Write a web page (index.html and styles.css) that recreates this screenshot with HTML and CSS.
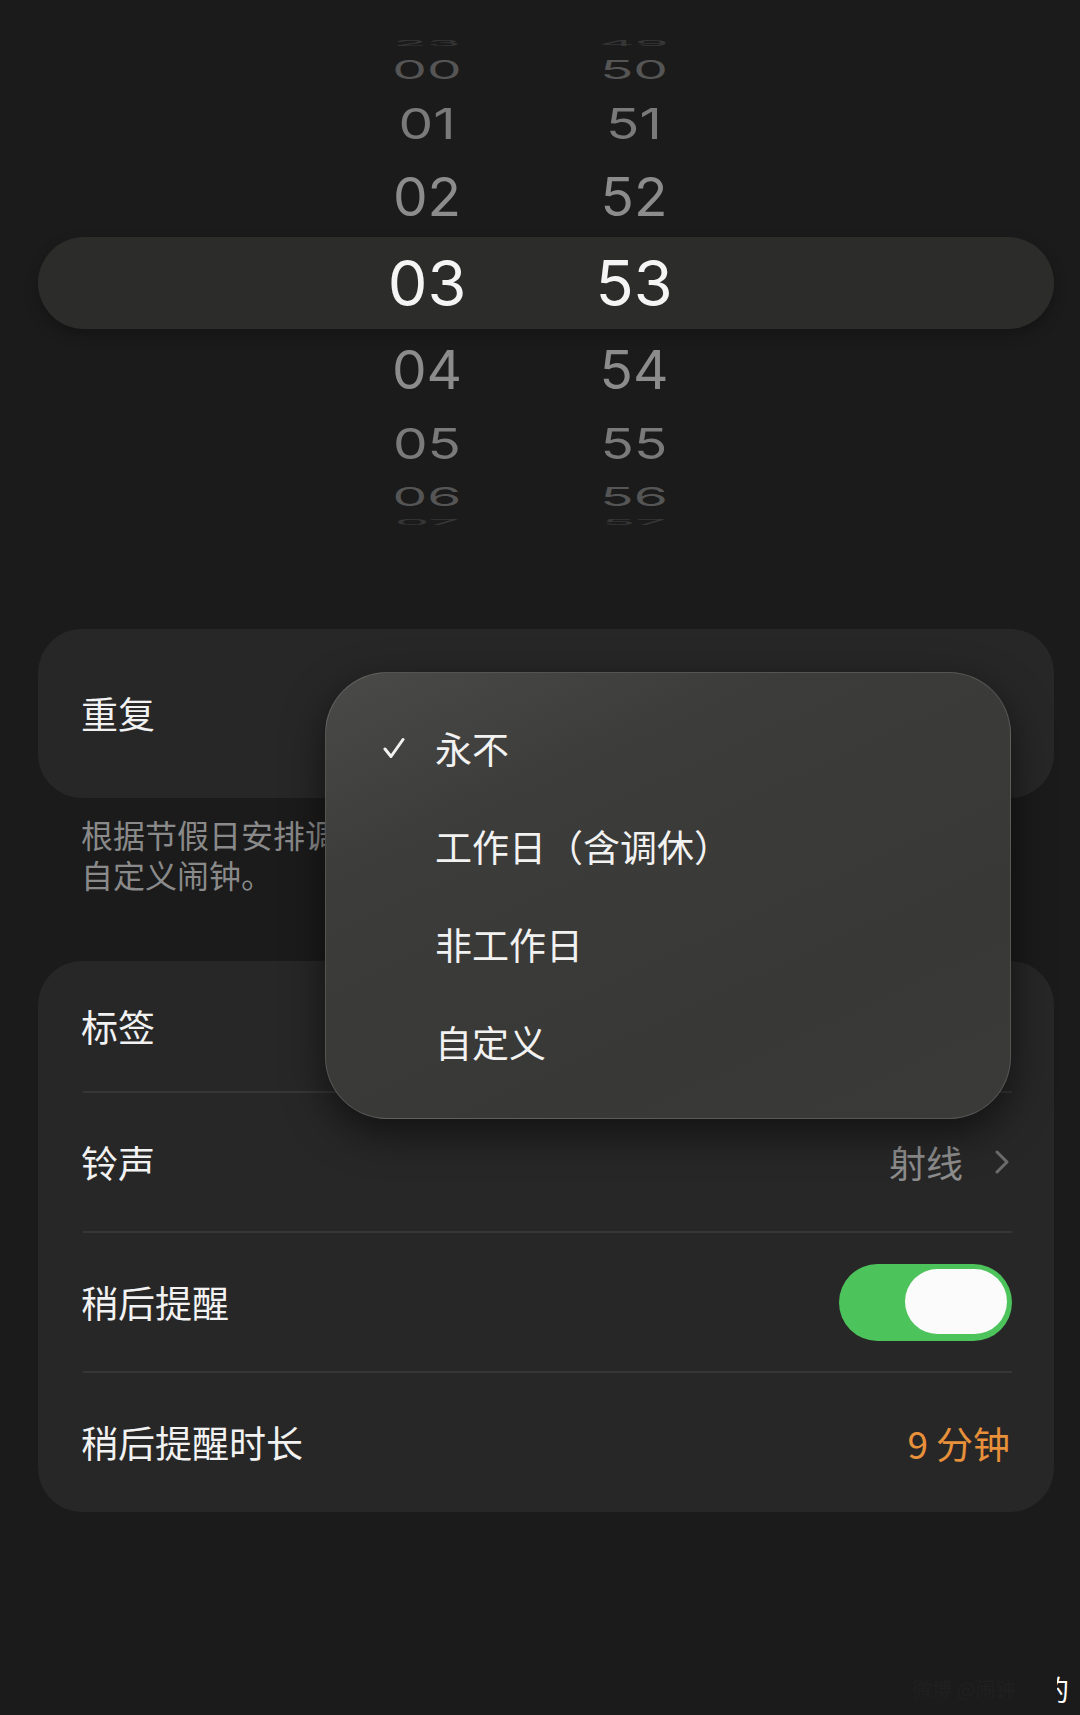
FILE: index.html
```html
<!DOCTYPE html>
<html lang="zh-CN">
<head>
<meta charset="utf-8">
<title>闹钟</title>
<link rel="stylesheet" href="styles.css">
</head>
<body>
<div class="page">
  <div class="picker">
    <div class="prow r-g1"><span class="cell"><span class="num">23</span></span><span class="cell"><span class="num">49</span></span></div>
    <div class="prow r-3"><span class="cell"><span class="num">00</span></span><span class="cell"><span class="num">50</span></span></div>
    <div class="prow r-2 t68"><span class="cell"><span class="num">01</span></span><span class="cell"><span class="num">51</span></span></div>
    <div class="prow r-1 t80"><span class="cell"><span class="num">02</span></span><span class="cell"><span class="num">52</span></span></div>
    <div class="prow sel"><span class="cell"><span class="num">03</span></span><span class="cell"><span class="num">53</span></span></div>
    <div class="prow r-1 t82"><span class="cell"><span class="num">04</span></span><span class="cell"><span class="num">54</span></span></div>
    <div class="prow r-2 t64"><span class="cell"><span class="num">05</span></span><span class="cell"><span class="num">55</span></span></div>
    <div class="prow r-3 t42"><span class="cell"><span class="num">06</span></span><span class="cell"><span class="num">56</span></span></div>
    <div class="prow r-g2"><span class="cell"><span class="num">07</span></span><span class="cell"><span class="num">57</span></span></div>
  </div>

  <div class="card repeat-card">
    <span class="label">重复</span>
  </div>
  <p class="footnote">根据节假日安排调休自动调整闹钟，如需其他重复规则请使用<br>自定义闹钟。</p>

  <div class="card list-card">
    <div class="row row-first"><span class="label">标签</span></div>
    <div class="row">
      <span class="label">铃声</span>
      <span class="value">射线
        <svg class="chev" width="14" height="24" viewBox="0 0 14 24"><path d="M2 2 L12 12 L2 22" fill="none" stroke="#6c6c6c" stroke-width="3" stroke-linecap="round" stroke-linejoin="round"/></svg>
      </span>
    </div>
    <div class="row">
      <span class="label">稍后提醒</span>
      <span class="toggle"><span class="knob"></span></span>
    </div>
    <div class="row row-last">
      <span class="label">稍后提醒时长</span>
      <span class="accent"><span class="digit">9</span>分钟</span>
    </div>
  </div>

  <div class="menu">
    <div class="mitem"><svg class="check" width="22" height="22" viewBox="0 0 22 22"><path d="M2 12 L8 19.5 L20 2.5" fill="none" stroke="#f2f2f2" stroke-width="3" stroke-linecap="round" stroke-linejoin="round"/></svg><span>永不</span></div>
    <div class="mitem"><span>工作日（含调休）</span></div>
    <div class="mitem"><span>非工作日</span></div>
    <div class="mitem"><span>自定义</span></div>
  </div>

  <div class="wm">微博 @闹钟</div>
  <div class="wm-edge"><span>的</span></div>
</div>
</body>
</html>
```

FILE: styles.css
```css
html, body {
  margin: 0;
  padding: 0;
  background: #1b1b1b;
}
.page {
  position: relative;
  width: 1080px;
  height: 1715px;
  box-sizing: border-box;
  padding: 37px 26px 0 38px;
  overflow: hidden;
  font-family: "Noto Sans CJK SC", "Noto Sans", sans-serif;
  color: #f2f2f2;
}

/* ---------- time picker ---------- */
.picker {
  display: flex;
  flex-direction: column;
}
.prow {
  display: flex;
  align-items: center;
  flex-shrink: 0;
  padding-left: 329px;
  gap: 87px;
}
.cell {
  width: 120px;
  display: flex;
  justify-content: center;
}
.num {
  display: block;
  font-family: Inter, "Liberation Sans", sans-serif;
  font-weight: 400;
  font-size: 55px;
  line-height: 1;
}
.r-g1 { height: 12px; color: #363636; }
.r-g2 { height: 10px; color: #363636; }
.r-g1 .num, .r-g2 .num { transform: scaleY(0.14); }
.r-3 { height: 40px; color: #555555; }
.r-3 .num { transform: scaleY(0.47); }
.r-2 { color: #7a7a7a; }
.r-2 .num { transform: scaleY(0.77); }
.r-1 { color: #8c8c8c; }
.r-1 .num { transform: scaleY(0.96); }
.t42 { height: 42px; }
.t64 { height: 64px; }
.t68 { height: 68px; }
.t80 { height: 80px; }
.t82 { height: 82px; }
.prow.sel {
  height: 92px;
  background: #2c2c2a;
  border-radius: 46px;
  color: #f5f5f5;
  box-shadow: 0 6px 14px rgba(0, 0, 0, 0.25);
}
.sel .num {
  font-size: 63px;
}

/* ---------- cards ---------- */
.card {
  background: #272727;
  border-radius: 44px;
}
.label {
  font-size: 37px;
  line-height: 1.2;
  color: #f2f2f2;
}
.repeat-card {
  height: 169px;
  margin-top: 102px;
  display: flex;
  align-items: center;
  padding: 0 43px;
}
.footnote {
  margin: 16px 0 0;
  padding-left: 43px;
  font-size: 32px;
  line-height: 40px;
  color: #8a8a8a;
  white-space: nowrap;
}
.list-card {
  margin-top: 67px;
  padding: 0 42px 0 45px;
  display: flex;
  flex-direction: column;
}
.list-card .label {
  margin-left: -2px;
}
.row {
  height: 138px;
  display: flex;
  align-items: center;
  justify-content: space-between;
  border-top: 2px solid #363636;
  flex-shrink: 0;
}
.row-first {
  height: 130px;
  border-top: none;
}
.row-last {
  height: 139px;
}
.value {
  display: flex;
  align-items: center;
  gap: 32px;
  font-size: 37px;
  color: #8d8d8d;
}
.chev {
  display: block;
  margin-right: 3px;
}
.accent {
  font-size: 37px;
  color: #e8913a;
  margin-right: 2px;
}
.digit {
  margin-right: 8px;
}
.toggle {
  width: 173px;
  height: 77px;
  box-sizing: border-box;
  border-radius: 39px;
  background: #4dc35b;
  display: flex;
  align-items: center;
  justify-content: flex-end;
  padding: 0 5px 2px;
}
.knob {
  width: 102px;
  height: 65px;
  border-radius: 33px;
  background: #fbfbfb;
}

/* ---------- popup menu ---------- */
.menu {
  position: absolute;
  left: 325px;
  top: 672px;
  width: 686px;
  height: 447px;
  box-sizing: border-box;
  padding: 26px 0 0 57px;
  border-radius: 62px;
  background: linear-gradient(155deg, #4a4a48 0%, #3c3c3a 28%, #383836 70%, #3a3a38 100%);
  border: 1.5px solid rgba(255, 255, 255, 0.14);
  box-shadow: 0 14px 40px rgba(0, 0, 0, 0.55);
  display: flex;
  flex-direction: column;
}
.mitem {
  height: 98px;
  display: flex;
  align-items: center;
  padding-left: 52px;
  position: relative;
  font-size: 37px;
  color: #f2f2f2;
  flex-shrink: 0;
}
.check {
  position: absolute;
  left: 0;
  top: 38px;
}

/* ---------- watermark ---------- */
.wm {
  position: absolute;
  left: 912px;
  top: 1676px;
  font-size: 20px;
  line-height: 26px;
  color: #202020;
  white-space: nowrap;
}
.wm-edge {
  position: absolute;
  left: 1057px;
  top: 1672px;
  width: 12px;
  height: 34px;
  overflow: hidden;
}
.wm-edge span {
  position: absolute;
  left: -16px;
  top: 0;
  font-size: 28px;
  line-height: 34px;
  color: #ffffff;
}
```
